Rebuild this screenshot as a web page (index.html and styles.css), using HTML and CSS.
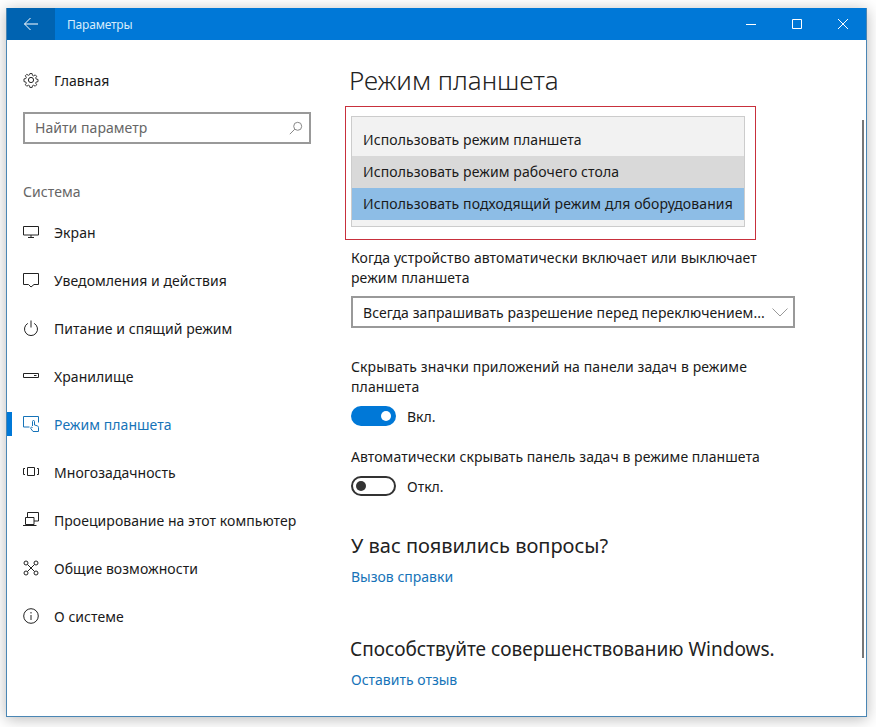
FILE: index.html
```html
<!DOCTYPE html>
<html lang="ru">
<head>
    <meta charset="UTF-8">
    <meta name="viewport" content="width=device-width, initial-scale=1.0">
    <title>Параметры</title>
    <link rel="stylesheet" href="styles.css">
</head>
<body>

<div class="window">
    <div class="titlebar">
        <div class="back-btn">
            <svg width="16" height="14" viewBox="0 0 16 14"><path d="M15 7H1.5M7.5 1 1.5 7l6 6" class="ico-white"/></svg>
        </div>
        <div class="win-title">Параметры</div>
        <div class="win-controls">
            <svg width="12" height="12" viewBox="0 0 12 12"><path d="M1 6.5h10" class="ico-white"/></svg>
            <svg width="12" height="12" viewBox="0 0 12 12"><path d="M1.5 1.5h9v9h-9z" class="ico-white"/></svg>
            <svg width="12" height="12" viewBox="0 0 12 12"><path d="M1 1l10 10M11 1 1 11" class="ico-white"/></svg>
        </div>
    </div>

    <div class="main">
        <div class="sidebar">
            <div class="nav-item">
                <svg class="nav-icon" viewBox="0 0 16 16">
                    <circle cx="8" cy="8" r="2.6"/>
                    <path d="M6.8.8h2.4l.4 2 1.3.6 1.8-1.1 1.6 1.6-1.1 1.8.6 1.3 2 .4v2.4l-2 .4-.6 1.3 1.1 1.8-1.6 1.6-1.8-1.1-1.3.6-.4 2H6.8l-.4-2-1.300-.6-1.800 1.100-1.600-1.600 1.100-1.800-.6-1.300-2-.4V6.800l2-.4.6-1.300-1.100-1.800 1.600-1.600 1.800 1.100 1.300-.6z" transform="translate(.8 .8) scale(.9)"/>
                </svg>
                <span>Главная</span>
            </div>

            <div class="search">
                <span>Найти параметр</span>
                <svg width="14" height="14" viewBox="0 0 14 14"><circle cx="8.7" cy="5.3" r="4"/><path d="M5.8 8.2.8 13.2"/></svg>
            </div>

            <div class="nav-heading">Система</div>

            <div class="nav-item">
                <svg class="nav-icon" viewBox="0 0 16 16"><path d="M.5 2.500h15v8.500H.5zM8 11v2.500M5 13.500h6"/></svg>
                <span>Экран</span>
            </div>
            <div class="nav-item">
                <svg class="nav-icon" viewBox="0 0 16 16"><path d="M.5 1.500h15v11h-4.500L8 15l-2.500-2.500h-5z"/></svg>
                <span>Уведомления и действия</span>
            </div>
            <div class="nav-item">
                <svg class="nav-icon" viewBox="0 0 16 16"><path d="M4.800 3.400a6.500 6.500 0 1 0 6.400 0M8 .5v7"/></svg>
                <span>Питание и спящий режим</span>
            </div>
            <div class="nav-item">
                <svg class="nav-icon" viewBox="0 0 16 16"><path d="M.5 5.500h15v4H.5zM11 7.500h2.500"/></svg>
                <span>Хранилище</span>
            </div>
            <div class="nav-item active">
                <svg class="nav-icon" viewBox="0 0 16 16"><path d="M6.500 11H.5V.5h15v6M9.500 10V5.500a1 1 0 0 1 2 0V9l2.700.8c1 .3 1.300 1 1.300 2v3.700H10L7.800 12.500c-.5-1 .7-1.800 1.700-1"/></svg>
                <span>Режим планшета</span>
            </div>
            <div class="nav-item">
                <svg class="nav-icon" viewBox="0 0 16 16"><path d="M4.500 3.500h7v8h-7zM2 4.500H.5v6H2M14 4.500h1.500v6H14"/></svg>
                <span>Многозадачность</span>
            </div>
            <div class="nav-item">
                <svg class="nav-icon" viewBox="0 0 16 16"><path d="M4.500 5V.5h11v8.500H11M2.500 5.500h8.500v7H2.500zM0 13.500h13.500"/></svg>
                <span>Проецирование на этот компьютер</span>
            </div>
            <div class="nav-item">
                <svg class="nav-icon" viewBox="0 0 16 16"><circle cx="3" cy="3" r="2"/><circle cx="13" cy="3" r="2"/><circle cx="3" cy="13" r="2"/><circle cx="13" cy="13" r="2"/><path d="M4.500 4.500l7 7M11.500 4.500l-7 7"/></svg>
                <span>Общие возможности</span>
            </div>
            <div class="nav-item">
                <svg class="nav-icon" viewBox="0 0 16 16"><circle cx="8" cy="8" r="7.300"/><path d="M8 7v5M8 4v1.500"/></svg>
                <span>О системе</span>
            </div>
        </div>

        <div class="content">
            <h1>Режим планшета</h1>

            <div class="red-box">
                <div class="dropdown-list">
                    <div class="option">Использовать режим планшета</div>
                    <div class="option hovered">Использовать режим рабочего стола</div>
                    <div class="option selected">Использовать подходящий режим для оборудования</div>
                </div>
            </div>

            <p class="label label-first">Когда устройство автоматически включает или выключает<br>режим планшета</p>
            <div class="select">
                <span>Всегда запрашивать разрешение перед переключением...</span>
                <svg width="16" height="9" viewBox="0 0 16 9"><path d="M.5.5 8 8l7.500-7.500"/></svg>
            </div>

            <p class="label label-second">Скрывать значки приложений на панели задач в режиме<br>планшета</p>
            <div class="toggle-row row-on">
                <div class="toggle on"><i></i></div>
                <span>Вкл.</span>
            </div>

            <p class="label label-third">Автоматически скрывать панель задач в режиме планшета</p>
            <div class="toggle-row row-off">
                <div class="toggle off"><i></i></div>
                <span>Откл.</span>
            </div>

            <h2 class="help-title">У вас появились вопросы?</h2>
            <a class="link" href="#">Вызов справки</a>

            <h2 class="improve-title">Способствуйте совершенствованию Windows.</h2>
            <a class="link" href="#">Оставить отзыв</a>

            <div class="scrollbar"></div>
        </div>
    </div>
</div>

</body>
</html>
```

FILE: styles.css
```css
html, body {
    height: 100%;
}

body {
    margin: 0;
    padding: 8px 9px 10px 6px;
    box-sizing: border-box;
    background: #fff;
    overflow: hidden;
    font-family: "Noto Sans", "Open Sans", sans-serif;
    font-size: 14px;
    line-height: 21px;
    color: #1a1a1a;
}

.window {
    height: 100%;
    box-sizing: border-box;
    display: flex;
    flex-direction: column;
    background: #fff;
    border: 1px solid #4a86b4;
    border-top: 0;
    box-shadow: 0 2px 14px rgba(0, 0, 0, 0.28);
}

.titlebar {
    height: 32px;
    flex: none;
    display: flex;
    align-items: center;
    background: #0078d7;
    color: #d8ecfb;
}

.back-btn {
    width: 48px;
    height: 32px;
    display: flex;
    align-items: center;
    justify-content: center;
    background: #0063b1;
}

.win-title {
    margin-left: 12px;
    font-size: 12px;
    letter-spacing: -0.2px;
}

.win-controls {
    margin-left: auto;
    margin-right: 17px;
    display: flex;
    gap: 34px;
}

.ico-white {
    fill: none;
    stroke: #fff;
    stroke-width: 1;
}

.main {
    flex: 1;
    display: flex;
    min-height: 0;
}

.sidebar {
    width: 344px;
    flex: none;
    padding-top: 16px;
    box-sizing: border-box;
    letter-spacing: 0.05px;
}

.nav-item {
    position: relative;
    height: 48px;
    display: flex;
    align-items: center;
    padding-left: 16px;
    gap: 15px;
}

.nav-item.active {
    color: #1673b8;
}

.nav-item.active::before {
    content: "";
    position: absolute;
    left: 0;
    top: 12px;
    width: 5px;
    height: 24px;
    background: #0078d7;
}

.nav-icon {
    width: 16px;
    height: 16px;
    flex: none;
    fill: none;
    stroke: #222;
    stroke-width: 1;
}

.active .nav-icon {
    stroke: #1673b8;
}

.search {
    margin: 8px 0 0 16px;
    width: 288px;
    height: 32px;
    box-sizing: border-box;
    border: 2px solid #999;
    padding: 0 6px 1px 10px;
    display: flex;
    align-items: center;
    justify-content: space-between;
    color: #666;
}

.search svg {
    fill: none;
    stroke: #888;
}

.nav-heading {
    margin: 37px 0 6px 16px;
    color: #666;
}

.content {
    position: relative;
    flex: 1;
    padding-top: 24px;
}

h1 {
    margin: 0 0 0 -2px;
    font-size: 26px;
    font-weight: 300;
    line-height: 32px;
    color: #222;
}

.red-box {
    width: 394px;
    margin: 10px 0 0 -6px;
    padding: 9px 10px 12px 5px;
    border: 1px solid #c8303c;
}

.dropdown-list {
    border: 1px solid #ccc;
    background: #f2f2f2;
    padding: 7px 0 6px;
}

.option {
    height: 32px;
    line-height: 32px;
    padding-left: 11px;
    letter-spacing: 0.11px;
}

.option.hovered {
    background: #d9d9d9;
}

.option.selected {
    background: #8dbde6;
}

.label {
    margin: 0;
    line-height: 20px;
    letter-spacing: 0.1px;
}

.label-first {
    margin-top: 8px;
}

.label-second {
    margin-top: 29px;
}

.label-third {
    margin-top: 21px;
    letter-spacing: 0.06px;
}

.select {
    margin-top: 8px;
    width: 444px;
    height: 32px;
    box-sizing: border-box;
    border: 2px solid #999;
    padding: 0 5px 0 10px;
    display: flex;
    align-items: center;
    justify-content: space-between;
    letter-spacing: 0.08px;
}

.select svg {
    fill: none;
    stroke: #999;
}

.toggle-row {
    display: flex;
    align-items: center;
    gap: 11px;
    height: 20px;
}

.row-on {
    margin-top: 9px;
}

.row-off {
    margin-top: 9px;
}

.toggle {
    width: 45px;
    height: 20px;
    box-sizing: border-box;
    border-radius: 10px;
    display: flex;
    align-items: center;
    padding: 0 5px;
}

.toggle i {
    width: 10px;
    height: 10px;
    border-radius: 50%;
}

.toggle.on {
    background: #0078d7;
    justify-content: flex-end;
}

.toggle.on i {
    background: #fff;
}

.toggle.off {
    border: 2px solid #333;
    padding: 0 3px;
}

.toggle.off i {
    background: #333;
}

h2 {
    margin: 0;
    font-size: 20px;
    font-weight: 400;
    line-height: 28px;
    color: #222;
}

.help-title {
    margin-top: 36px;
}

.improve-title {
    margin: 48px 0 0 -1px;
    font-size: 19px;
}

.link {
    display: block;
    margin-top: 6px;
    color: #1673b8;
    text-decoration: none;
}

.scrollbar {
    position: absolute;
    right: 2px;
    top: 80px;
    width: 2px;
    height: 538px;
    background: #777;
}
```
